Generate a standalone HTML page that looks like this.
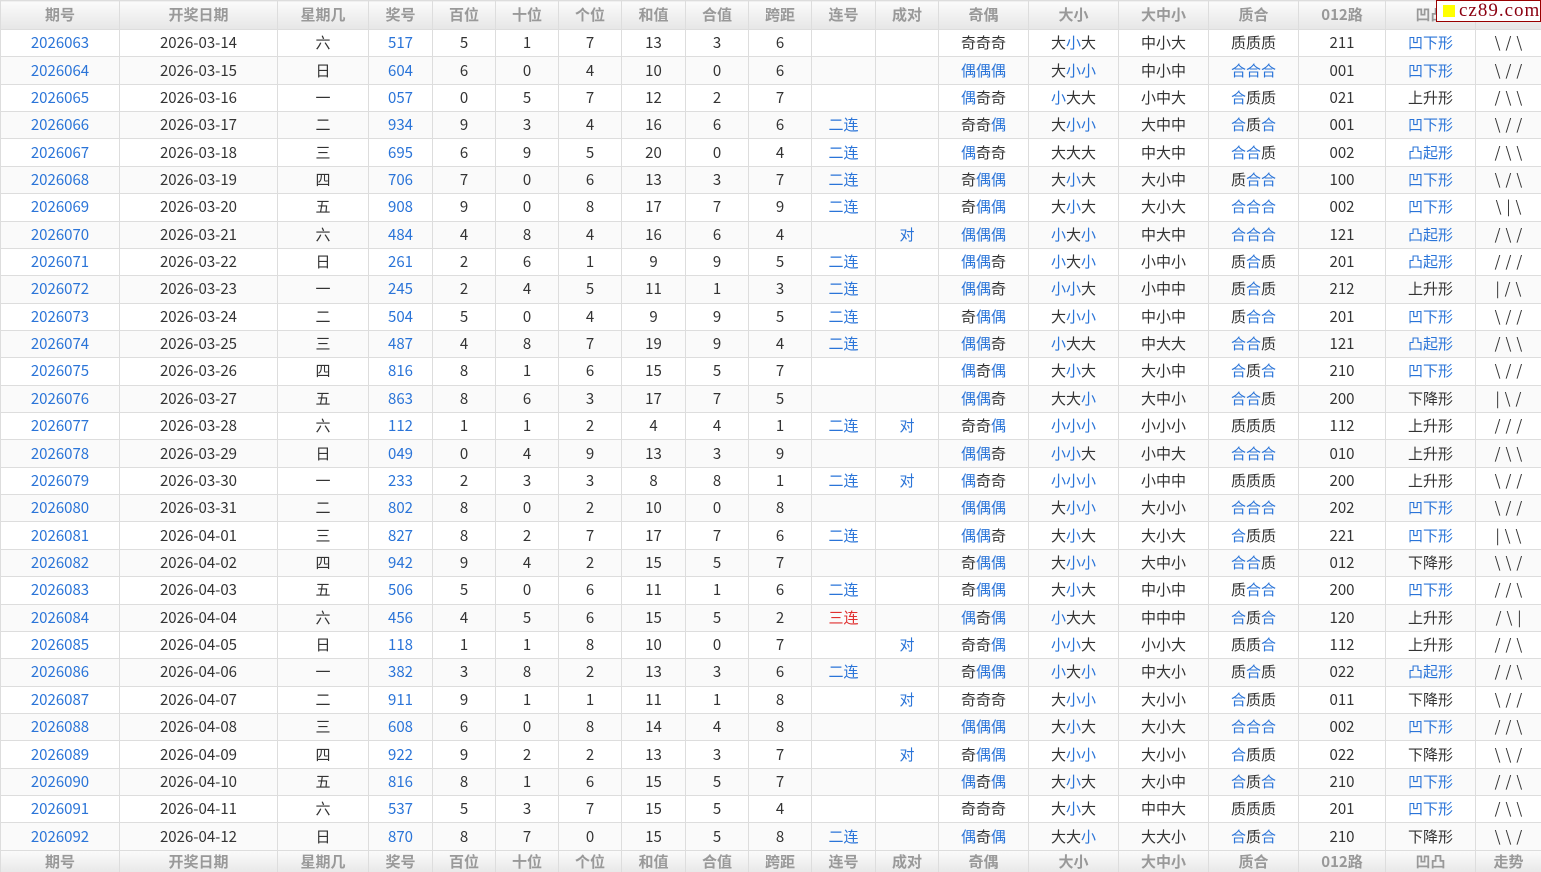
<!DOCTYPE html>
<html><head><meta charset="utf-8"><style>
html,body{margin:0;padding:0;width:1541px;height:872px;overflow:hidden;background:#fff}
table{border-collapse:collapse;table-layout:fixed;width:1541px;font-family:"Noto Sans CJK SC","Liberation Sans",sans-serif;font-size:15px;color:#333}
td,th{border:1px solid #ddd;text-align:center;padding:0;white-space:nowrap;overflow:hidden;line-height:18px}
th{height:28px;background:linear-gradient(#fbfbfb,#e6e6e6);color:#999;font-weight:bold;font-size:15px}
tbody td{height:26.37px}
tbody tr:nth-child(even){background:#fafafa}
i{font-style:normal;color:#2a74d8}
.r{color:#e03030}
.t{letter-spacing:5px;padding-left:5px}
tfoot th{height:22px;vertical-align:top;padding-top:2px}
#wm{position:absolute;left:1436px;top:0;width:105px;height:22px;background:#fff;border:1px solid #900;font-family:"Liberation Serif",serif;font-size:19px;color:#8b0010;line-height:20px;box-sizing:border-box;padding-left:22px;letter-spacing:1px;z-index:2}
#wm:before{content:"";position:absolute;left:6px;top:4px;width:12px;height:12px;background:#ff0}
</style></head><body>
<div id="wm">cz89.com</div>
<table>
<colgroup><col style="width:119px"><col style="width:158px"><col style="width:91px"><col style="width:64px"><col style="width:63px"><col style="width:63px"><col style="width:63px"><col style="width:64px"><col style="width:63px"><col style="width:63px"><col style="width:64px"><col style="width:63px"><col style="width:90px"><col style="width:90px"><col style="width:90px"><col style="width:90px"><col style="width:87px"><col style="width:90px"><col style="width:66px"></colgroup>
<thead><tr><th>期号</th><th>开奖日期</th><th>星期几</th><th>奖号</th><th>百位</th><th>十位</th><th>个位</th><th>和值</th><th>合值</th><th>跨距</th><th>连号</th><th>成对</th><th>奇偶</th><th>大小</th><th>大中小</th><th>质合</th><th>012路</th><th>凹凸</th><th>走势</th></tr></thead>
<tbody>
<tr><td><i>2026063</i></td><td>2026-03-14</td><td>六</td><td><i>517</i></td><td>5</td><td>1</td><td>7</td><td>13</td><td>3</td><td>6</td><td></td><td></td><td>奇奇奇</td><td>大<i>小</i>大</td><td>中小大</td><td>质质质</td><td>211</td><td><i>凹下形</i></td><td class="t">\/\</td></tr>
<tr><td><i>2026064</i></td><td>2026-03-15</td><td>日</td><td><i>604</i></td><td>6</td><td>0</td><td>4</td><td>10</td><td>0</td><td>6</td><td></td><td></td><td><i>偶偶偶</i></td><td>大<i>小小</i></td><td>中小中</td><td><i>合合合</i></td><td>001</td><td><i>凹下形</i></td><td class="t">\//</td></tr>
<tr><td><i>2026065</i></td><td>2026-03-16</td><td>一</td><td><i>057</i></td><td>0</td><td>5</td><td>7</td><td>12</td><td>2</td><td>7</td><td></td><td></td><td><i>偶</i>奇奇</td><td><i>小</i>大大</td><td>小中大</td><td><i>合</i>质质</td><td>021</td><td>上升形</td><td class="t">/\\</td></tr>
<tr><td><i>2026066</i></td><td>2026-03-17</td><td>二</td><td><i>934</i></td><td>9</td><td>3</td><td>4</td><td>16</td><td>6</td><td>6</td><td><i>二连</i></td><td></td><td>奇奇<i>偶</i></td><td>大<i>小小</i></td><td>大中中</td><td><i>合</i>质<i>合</i></td><td>001</td><td><i>凹下形</i></td><td class="t">\//</td></tr>
<tr><td><i>2026067</i></td><td>2026-03-18</td><td>三</td><td><i>695</i></td><td>6</td><td>9</td><td>5</td><td>20</td><td>0</td><td>4</td><td><i>二连</i></td><td></td><td><i>偶</i>奇奇</td><td>大大大</td><td>中大中</td><td><i>合合</i>质</td><td>002</td><td><i>凸起形</i></td><td class="t">/\\</td></tr>
<tr><td><i>2026068</i></td><td>2026-03-19</td><td>四</td><td><i>706</i></td><td>7</td><td>0</td><td>6</td><td>13</td><td>3</td><td>7</td><td><i>二连</i></td><td></td><td>奇<i>偶偶</i></td><td>大<i>小</i>大</td><td>大小中</td><td>质<i>合合</i></td><td>100</td><td><i>凹下形</i></td><td class="t">\/\</td></tr>
<tr><td><i>2026069</i></td><td>2026-03-20</td><td>五</td><td><i>908</i></td><td>9</td><td>0</td><td>8</td><td>17</td><td>7</td><td>9</td><td><i>二连</i></td><td></td><td>奇<i>偶偶</i></td><td>大<i>小</i>大</td><td>大小大</td><td><i>合合合</i></td><td>002</td><td><i>凹下形</i></td><td class="t">\|\</td></tr>
<tr><td><i>2026070</i></td><td>2026-03-21</td><td>六</td><td><i>484</i></td><td>4</td><td>8</td><td>4</td><td>16</td><td>6</td><td>4</td><td></td><td><i>对</i></td><td><i>偶偶偶</i></td><td><i>小</i>大<i>小</i></td><td>中大中</td><td><i>合合合</i></td><td>121</td><td><i>凸起形</i></td><td class="t">/\/</td></tr>
<tr><td><i>2026071</i></td><td>2026-03-22</td><td>日</td><td><i>261</i></td><td>2</td><td>6</td><td>1</td><td>9</td><td>9</td><td>5</td><td><i>二连</i></td><td></td><td><i>偶偶</i>奇</td><td><i>小</i>大<i>小</i></td><td>小中小</td><td>质<i>合</i>质</td><td>201</td><td><i>凸起形</i></td><td class="t">///</td></tr>
<tr><td><i>2026072</i></td><td>2026-03-23</td><td>一</td><td><i>245</i></td><td>2</td><td>4</td><td>5</td><td>11</td><td>1</td><td>3</td><td><i>二连</i></td><td></td><td><i>偶偶</i>奇</td><td><i>小小</i>大</td><td>小中中</td><td>质<i>合</i>质</td><td>212</td><td>上升形</td><td class="t">|/\</td></tr>
<tr><td><i>2026073</i></td><td>2026-03-24</td><td>二</td><td><i>504</i></td><td>5</td><td>0</td><td>4</td><td>9</td><td>9</td><td>5</td><td><i>二连</i></td><td></td><td>奇<i>偶偶</i></td><td>大<i>小小</i></td><td>中小中</td><td>质<i>合合</i></td><td>201</td><td><i>凹下形</i></td><td class="t">\//</td></tr>
<tr><td><i>2026074</i></td><td>2026-03-25</td><td>三</td><td><i>487</i></td><td>4</td><td>8</td><td>7</td><td>19</td><td>9</td><td>4</td><td><i>二连</i></td><td></td><td><i>偶偶</i>奇</td><td><i>小</i>大大</td><td>中大大</td><td><i>合合</i>质</td><td>121</td><td><i>凸起形</i></td><td class="t">/\\</td></tr>
<tr><td><i>2026075</i></td><td>2026-03-26</td><td>四</td><td><i>816</i></td><td>8</td><td>1</td><td>6</td><td>15</td><td>5</td><td>7</td><td></td><td></td><td><i>偶</i>奇<i>偶</i></td><td>大<i>小</i>大</td><td>大小中</td><td><i>合</i>质<i>合</i></td><td>210</td><td><i>凹下形</i></td><td class="t">\//</td></tr>
<tr><td><i>2026076</i></td><td>2026-03-27</td><td>五</td><td><i>863</i></td><td>8</td><td>6</td><td>3</td><td>17</td><td>7</td><td>5</td><td></td><td></td><td><i>偶偶</i>奇</td><td>大大<i>小</i></td><td>大中小</td><td><i>合合</i>质</td><td>200</td><td>下降形</td><td class="t">|\/</td></tr>
<tr><td><i>2026077</i></td><td>2026-03-28</td><td>六</td><td><i>112</i></td><td>1</td><td>1</td><td>2</td><td>4</td><td>4</td><td>1</td><td><i>二连</i></td><td><i>对</i></td><td>奇奇<i>偶</i></td><td><i>小小小</i></td><td>小小小</td><td>质质质</td><td>112</td><td>上升形</td><td class="t">///</td></tr>
<tr><td><i>2026078</i></td><td>2026-03-29</td><td>日</td><td><i>049</i></td><td>0</td><td>4</td><td>9</td><td>13</td><td>3</td><td>9</td><td></td><td></td><td><i>偶偶</i>奇</td><td><i>小小</i>大</td><td>小中大</td><td><i>合合合</i></td><td>010</td><td>上升形</td><td class="t">/\\</td></tr>
<tr><td><i>2026079</i></td><td>2026-03-30</td><td>一</td><td><i>233</i></td><td>2</td><td>3</td><td>3</td><td>8</td><td>8</td><td>1</td><td><i>二连</i></td><td><i>对</i></td><td><i>偶</i>奇奇</td><td><i>小小小</i></td><td>小中中</td><td>质质质</td><td>200</td><td>上升形</td><td class="t">\//</td></tr>
<tr><td><i>2026080</i></td><td>2026-03-31</td><td>二</td><td><i>802</i></td><td>8</td><td>0</td><td>2</td><td>10</td><td>0</td><td>8</td><td></td><td></td><td><i>偶偶偶</i></td><td>大<i>小小</i></td><td>大小小</td><td><i>合合合</i></td><td>202</td><td><i>凹下形</i></td><td class="t">\//</td></tr>
<tr><td><i>2026081</i></td><td>2026-04-01</td><td>三</td><td><i>827</i></td><td>8</td><td>2</td><td>7</td><td>17</td><td>7</td><td>6</td><td><i>二连</i></td><td></td><td><i>偶偶</i>奇</td><td>大<i>小</i>大</td><td>大小大</td><td><i>合</i>质质</td><td>221</td><td><i>凹下形</i></td><td class="t">|\\</td></tr>
<tr><td><i>2026082</i></td><td>2026-04-02</td><td>四</td><td><i>942</i></td><td>9</td><td>4</td><td>2</td><td>15</td><td>5</td><td>7</td><td></td><td></td><td>奇<i>偶偶</i></td><td>大<i>小小</i></td><td>大中小</td><td><i>合合</i>质</td><td>012</td><td>下降形</td><td class="t">\\/</td></tr>
<tr><td><i>2026083</i></td><td>2026-04-03</td><td>五</td><td><i>506</i></td><td>5</td><td>0</td><td>6</td><td>11</td><td>1</td><td>6</td><td><i>二连</i></td><td></td><td>奇<i>偶偶</i></td><td>大<i>小</i>大</td><td>中小中</td><td>质<i>合合</i></td><td>200</td><td><i>凹下形</i></td><td class="t">//\</td></tr>
<tr><td><i>2026084</i></td><td>2026-04-04</td><td>六</td><td><i>456</i></td><td>4</td><td>5</td><td>6</td><td>15</td><td>5</td><td>2</td><td class="r">三连</td><td></td><td><i>偶</i>奇<i>偶</i></td><td><i>小</i>大大</td><td>中中中</td><td><i>合</i>质<i>合</i></td><td>120</td><td>上升形</td><td class="t">/\|</td></tr>
<tr><td><i>2026085</i></td><td>2026-04-05</td><td>日</td><td><i>118</i></td><td>1</td><td>1</td><td>8</td><td>10</td><td>0</td><td>7</td><td></td><td><i>对</i></td><td>奇奇<i>偶</i></td><td><i>小小</i>大</td><td>小小大</td><td>质质<i>合</i></td><td>112</td><td>上升形</td><td class="t">//\</td></tr>
<tr><td><i>2026086</i></td><td>2026-04-06</td><td>一</td><td><i>382</i></td><td>3</td><td>8</td><td>2</td><td>13</td><td>3</td><td>6</td><td><i>二连</i></td><td></td><td>奇<i>偶偶</i></td><td><i>小</i>大<i>小</i></td><td>中大小</td><td>质<i>合</i>质</td><td>022</td><td><i>凸起形</i></td><td class="t">//\</td></tr>
<tr><td><i>2026087</i></td><td>2026-04-07</td><td>二</td><td><i>911</i></td><td>9</td><td>1</td><td>1</td><td>11</td><td>1</td><td>8</td><td></td><td><i>对</i></td><td>奇奇奇</td><td>大<i>小小</i></td><td>大小小</td><td><i>合</i>质质</td><td>011</td><td>下降形</td><td class="t">\//</td></tr>
<tr><td><i>2026088</i></td><td>2026-04-08</td><td>三</td><td><i>608</i></td><td>6</td><td>0</td><td>8</td><td>14</td><td>4</td><td>8</td><td></td><td></td><td><i>偶偶偶</i></td><td>大<i>小</i>大</td><td>大小大</td><td><i>合合合</i></td><td>002</td><td><i>凹下形</i></td><td class="t">//\</td></tr>
<tr><td><i>2026089</i></td><td>2026-04-09</td><td>四</td><td><i>922</i></td><td>9</td><td>2</td><td>2</td><td>13</td><td>3</td><td>7</td><td></td><td><i>对</i></td><td>奇<i>偶偶</i></td><td>大<i>小小</i></td><td>大小小</td><td><i>合</i>质质</td><td>022</td><td>下降形</td><td class="t">\\/</td></tr>
<tr><td><i>2026090</i></td><td>2026-04-10</td><td>五</td><td><i>816</i></td><td>8</td><td>1</td><td>6</td><td>15</td><td>5</td><td>7</td><td></td><td></td><td><i>偶</i>奇<i>偶</i></td><td>大<i>小</i>大</td><td>大小中</td><td><i>合</i>质<i>合</i></td><td>210</td><td><i>凹下形</i></td><td class="t">//\</td></tr>
<tr><td><i>2026091</i></td><td>2026-04-11</td><td>六</td><td><i>537</i></td><td>5</td><td>3</td><td>7</td><td>15</td><td>5</td><td>4</td><td></td><td></td><td>奇奇奇</td><td>大<i>小</i>大</td><td>中中大</td><td>质质质</td><td>201</td><td><i>凹下形</i></td><td class="t">/\\</td></tr>
<tr><td><i>2026092</i></td><td>2026-04-12</td><td>日</td><td><i>870</i></td><td>8</td><td>7</td><td>0</td><td>15</td><td>5</td><td>8</td><td><i>二连</i></td><td></td><td><i>偶</i>奇<i>偶</i></td><td>大大<i>小</i></td><td>大大小</td><td><i>合</i>质<i>合</i></td><td>210</td><td>下降形</td><td class="t">\\/</td></tr>
</tbody>
<tfoot><tr><th>期号</th><th>开奖日期</th><th>星期几</th><th>奖号</th><th>百位</th><th>十位</th><th>个位</th><th>和值</th><th>合值</th><th>跨距</th><th>连号</th><th>成对</th><th>奇偶</th><th>大小</th><th>大中小</th><th>质合</th><th>012路</th><th>凹凸</th><th>走势</th></tr></tfoot>
</table>
</body></html>
